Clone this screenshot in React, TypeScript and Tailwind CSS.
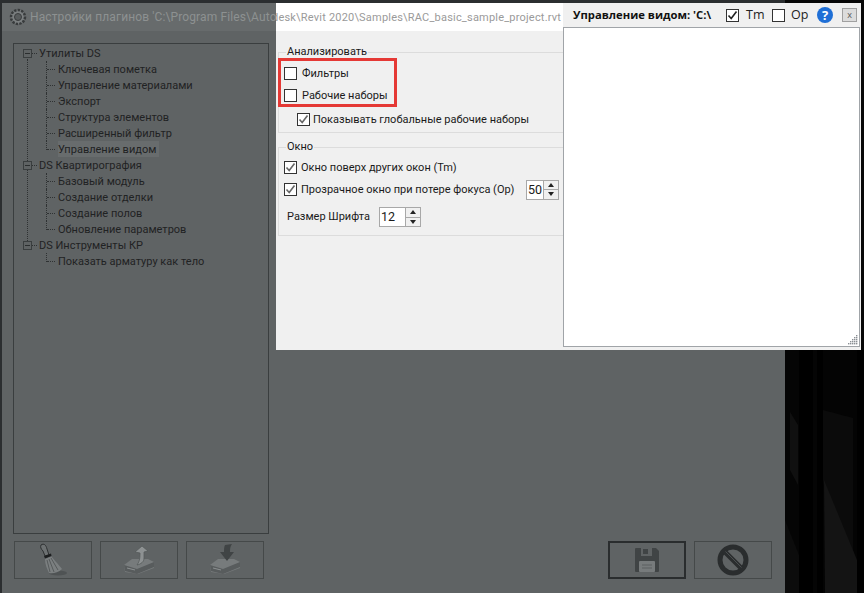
const font = "font-['Roboto','Open_Sans',sans-serif]";

function Minus() {
  return (
    <span className="absolute left-[9px] top-[4px] flex h-[9px] w-[9px] items-center justify-center border border-[#3a3e3f] bg-[#5f6364]">
      <span className="h-px w-[5px] bg-[#2b2e2f]" />
    </span>
  );
}

function Root({ label }: { label: string }) {
  return (
    <div className="relative h-4 pl-[25px] text-[11px] leading-[18px] text-[#1f2223]">
      <Minus />
      <span className="absolute left-[18px] top-[8px] w-[5px] border-t border-dotted border-[#2f3233]" />
      {label}
    </div>
  );
}

function Child({ label, selected, last }: { label: string; selected?: boolean; last?: boolean }) {
  return (
    <div className="relative h-4 pl-[44px] text-[11px] leading-[18px] text-[#1f2223]">
      <span className={`absolute left-[32px] top-0 border-l border-dotted border-[#2f3233] ${last ? "h-[9px]" : "h-4"}`} />
      <span className="absolute left-[33px] top-[8px] w-[8px] border-t border-dotted border-[#2f3233]" />
      <span className={selected ? "inline-block h-[16px] bg-[#686c6d] pr-[3px]" : ""}>{label}</span>
    </div>
  );
}

function Tree() {
  return (
    <div className="relative h-[491px] w-[256px] border border-[#3a3e3f] pt-[1px]">
      <span className="absolute left-[13px] top-[15px] h-[188px] border-l border-dotted border-[#2f3233]" />
      <Root label="Утилиты DS" />
      <Child label="Ключевая пометка" />
      <Child label="Управление материалами" />
      <Child label="Экспорт" />
      <Child label="Структура элементов" />
      <Child label="Расширенный фильтр" />
      <Child label="Управление видом" selected last />
      <Root label="DS Квартирография" />
      <Child label="Базовый модуль" />
      <Child label="Создание отделки" />
      <Child label="Создание полов" />
      <Child label="Обновление параметров" last />
      <Root label="DS Инструменты КР" />
      <Child label="Показать арматуру как тело" last />
    </div>
  );
}

function Broom() {
  return (
    <svg width="34" height="34" viewBox="0 0 34 34">
      <ellipse cx="22" cy="30" rx="9" ry="2.5" fill="#4f5354" />
      <path d="M5 2 C8 0 10 2 11 6 L13 12 L9 13 L7 8 C5 6 4 4 5 2Z" fill="#6d7172" stroke="#2e3132" strokeWidth="1" />
      <path d="M8 13 L15 10.5 L15.5 13 L9 15.5Z" fill="#1d1f20" />
      <path d="M9 16 L15.5 13.5 C19 18 24 23 26 26 C22 30 16 31 13 30 C11 26 9 21 9 16Z" fill="#7b7f80" />
      <path d="M11 17 L14 29 M13 16 L18 29 M15 15 L22 27" stroke="#565a5b" strokeWidth="1" />
    </svg>
  );
}

function Drive({ up }: { up?: boolean }) {
  return (
    <svg width="34" height="34" viewBox="0 0 34 34">
      <path d="M2 22 L10 16 H26 L32 19 L32 25 L16 31 L3 29Z" fill="#777b7c" />
      <path d="M2 22 L15 26 L32 19 L32 24 L15 31 L3 28Z" fill="#585c5d" />
      <path d="M5 25 L13 27" stroke="#8c9091" strokeWidth="1" />
      {up ? (
        <path d="M13 9 L20 3 L26 8 L22 9 L22 15 C22 19 19 21 15 22 C17 19 18 17 18 10Z" fill="#8d9192" stroke="#565a5b" strokeWidth="0.8" />
      ) : (
        <path d="M17 2 L24 1 C22 4 22 6 22 9 H26 L19 18 L12 9 H16 C16 6 16 4 17 2Z" fill="#404445" />
      )}
    </svg>
  );
}

function Floppy() {
  return (
    <svg width="26" height="26" viewBox="0 0 26 26">
      <path d="M2 1 H22 L25 4 V24 Q25 25 24 25 H2 Q1 25 1 24 V2 Q1 1 2 1Z" fill="#404445" />
      <rect x="7" y="1" width="11" height="8" fill="#5f6364" />
      <rect x="9" y="2" width="5" height="5" fill="#404445" />
      <rect x="5" y="14" width="16" height="11" rx="1" fill="#777b7c" />
      <path d="M8 18 H18 M8 21 H18" stroke="#5c6061" strokeWidth="1" />
    </svg>
  );
}

function Ban() {
  return (
    <svg width="32" height="32" viewBox="0 0 32 32">
      <circle cx="16" cy="16" r="13" fill="none" stroke="#2a2d2e" strokeWidth="5" />
      <path d="M7 7 L25 25" stroke="#2a2d2e" strokeWidth="5" />
      <path d="M8.5 7.5 L24.5 23.5" stroke="#4a4e4f" strokeWidth="1" />
    </svg>
  );
}

function ToolButton({ children, strong }: { children: React.ReactNode; strong?: boolean }) {
  return (
    <div className={`flex h-[38px] w-[78px] items-center justify-center ${strong ? "border-2 border-[#2a2d2e]" : "border border-[#454949]"}`}>
      {children}
    </div>
  );
}

function Check({ checked, dark }: { checked?: boolean; dark?: boolean }) {
  return (
    <span className="flex h-[13px] w-[13px] shrink-0 items-center justify-center border border-[#333] bg-white">
      {checked && (
        <svg width="11" height="11" viewBox="0 0 11 11">
          <path d="M1.5 5.5 L4.2 8.5 L9.5 1.5" fill="none" stroke={dark ? "#222" : "#666"} strokeWidth="1.6" />
        </svg>
      )}
    </span>
  );
}

function Spinner({ value, width }: { value: string; width: string }) {
  return (
    <div className={`flex h-5 items-stretch border border-[#a8a8a8] bg-white ${width}`}>
      <span className="flex-1 pl-[1px] text-[12.5px] leading-[18px] text-[#1a1a1a]">{value}</span>
      <span className="flex w-[15px] flex-col border-l border-[#a8a8a8] bg-[#f0f0f0]">
        <span className="flex flex-1 items-center justify-center border-b border-[#a8a8a8]">
          <span className="border-x-[3px] border-b-[4px] border-x-transparent border-b-[#222]" />
        </span>
        <span className="flex flex-1 items-center justify-center">
          <span className="border-x-[3px] border-t-[4px] border-x-transparent border-t-[#222]" />
        </span>
      </span>
    </div>
  );
}

function Settings() {
  return (
    <div className="absolute left-[276px] top-[3px] flex h-[347px] w-[288px] flex-col bg-[#f0f0f0]">
      <div className="h-[28px] shrink-0 overflow-hidden whitespace-nowrap bg-white pt-[6px] text-[11px] leading-[18px] tracking-[0.2px] text-[#9a9a9a]">
        <span className="ml-[-4px]">desk\Revit 2020\Samples\RAC_basic_sample_project.rvt</span>
      </div>
      <div className="relative pl-[2px] text-[11px] text-[#1a1a1a]">
        <div className="mt-[21px] h-[81px] border-y border-l border-[#dcdcdc]">
          <div className="ml-[7px] mt-[-9px] w-fit bg-[#f0f0f0] px-[1px] leading-4">Анализировать</div>
          <div className="ml-[5px] mt-[7px] flex h-[13px] items-center gap-[5px] leading-4"><Check />Фильтры</div>
          <div className="ml-[5px] mt-[9px] flex h-[13px] items-center gap-[5px] leading-4"><Check />Рабочие наборы</div>
          <div className="ml-[18px] mt-[11px] flex h-[13px] items-center gap-[3px] leading-4"><Check checked />Показывать глобальные рабочие наборы</div>
        </div>
        <div className="mt-[14px] h-[89px] border-y border-l border-[#dcdcdc]">
          <div className="ml-[7px] mt-[-9px] w-fit bg-[#f0f0f0] px-[1px] leading-4">Окно</div>
          <div className="ml-[5px] mt-[6px] flex h-[13px] items-center gap-[4px] leading-4"><Check checked />Окно поверх других окон (Tm)</div>
          <div className="ml-[5px] mt-[9px] flex h-[13px] items-center gap-[4px] whitespace-nowrap leading-4">
            <Check checked />
            <span className="w-[221px]">Прозрачное окно при потере фокуса (Op)</span>
            <Spinner value="50" width="w-[33px]" />
          </div>
          <div className="ml-[8px] mt-[11px] flex h-5 items-center leading-4">
            <span className="w-[92px]">Размер Шрифта</span>
            <Spinner value="12" width="w-[42px]" />
          </div>
        </div>
        <div className="absolute left-[2px] top-[27px] h-[49px] w-[119px] border-[3px] border-[#e53935]" />
      </div>
    </div>
  );
}

function Grip() {
  return (
    <svg className="absolute bottom-[1px] right-[1px]" width="10" height="10" viewBox="0 0 10 10">
      {[[8,0],[6,2],[8,2],[4,4],[6,4],[8,4],[2,6],[4,6],[6,6],[8,6],[0,8],[2,8],[4,8],[6,8],[8,8]].map(([x, y]) => (
        <rect key={`${x}-${y}`} x={x} y={y} width="1.4" height="1.4" fill="#8a8f94" />
      ))}
    </svg>
  );
}

function ViewWindow() {
  return (
    <div className="absolute left-[563px] top-[3px] flex h-[347px] w-[298px] flex-col bg-[#f0f0f0] pb-[3px] pr-[1px]">
      <div className="flex h-[24px] shrink-0 items-center text-[12.5px] text-[#111] font-['Open_Sans',sans-serif]">
        <span className="ml-[10px] w-[153px] whitespace-nowrap text-[11.25px] font-bold">Управление видом: 'C:\</span>
        <Check checked dark />
        <span className="ml-[7px] w-[26px] text-[#222]">Tm</span>
        <Check dark />
        <span className="ml-[6px] w-[26px] text-[#222]">Op</span>
        <span className="flex h-4 w-4 items-center justify-center rounded-full bg-[#1f6fd6] text-[13px] font-bold leading-none text-white">?</span>
        <span className="ml-[9px] flex h-[14px] w-[15px] items-center justify-center border border-[#a0a0a0] bg-[#dcdcdc] pb-[2px] text-[9px] leading-none text-[#555]">x</span>
      </div>
      <div className="relative flex-1 border border-[#a0a4a8] bg-white">
        <Grip />
      </div>
    </div>
  );
}

function Scene() {
  return (
    <svg className="h-full w-full" viewBox="0 0 79 243" preserveAspectRatio="none">
      <rect width="79" height="243" fill="#050505" />
      <path d="M38 0 H72 V243 H38Z" fill="#040404" />
      <path d="M38 60 L68 68 V243 H58 L38 130Z" fill="#0b0b0b" />
      <path d="M5 62 L13 75 V135 L5 120Z" fill="#101010" />
      <path d="M0 170 L14 205 L14 243 H0Z" fill="#0c0c0c" />
      <path d="M39 130 L72 210 V243 H40Z" fill="#141414" />
      <rect x="14" width="14" height="243" fill="#000" />
      <rect x="32" width="6" height="243" fill="#000" />
      <rect x="72" width="7" height="243" fill="#000" />
    </svg>
  );
}

export default function App() {
  return (
    <div className={`relative h-[593px] w-[864px] overflow-hidden bg-[#070707] ${font}`}>
      <div className="absolute right-0 top-[350px] h-[243px] w-[79px]"><Scene /></div>
      <div className="flex h-[593px] w-[785px] flex-col border-l-2 border-t-[3px] border-[#2b2e30] bg-[#5f6364]">
        <div className="flex h-[28px] shrink-0 items-center bg-[#676b6c] pl-[6px]">
          <svg width="20" height="20" viewBox="0 0 20 20" className="mr-[2px] shrink-0">
            <circle cx="10" cy="10" r="7" fill="#7b7f80" stroke="#383b3c" strokeWidth="2.5" strokeDasharray="2.4 1.2" />
            <circle cx="10" cy="10" r="3.5" fill="#585c5d" stroke="#3a3d3e" strokeWidth="1" />
          </svg>
          <span className="whitespace-nowrap text-[12px] tracking-[0.12px] text-[#8d9191]">Настройки плагинов 'C:\Program Files\Autod</span>
        </div>
        <div className="ml-[11px] mt-[12px]"><Tree /></div>
        <div className="ml-[12px] mt-[7px] flex w-[758px]">
          <div className="flex gap-2">
            <ToolButton><Broom /></ToolButton>
            <ToolButton><Drive up /></ToolButton>
            <ToolButton><Drive /></ToolButton>
          </div>
          <div className="ml-auto flex gap-2">
            <ToolButton strong><Floppy /></ToolButton>
            <ToolButton><Ban /></ToolButton>
          </div>
        </div>
      </div>
      <Settings />
      <ViewWindow />
    </div>
  );
}
